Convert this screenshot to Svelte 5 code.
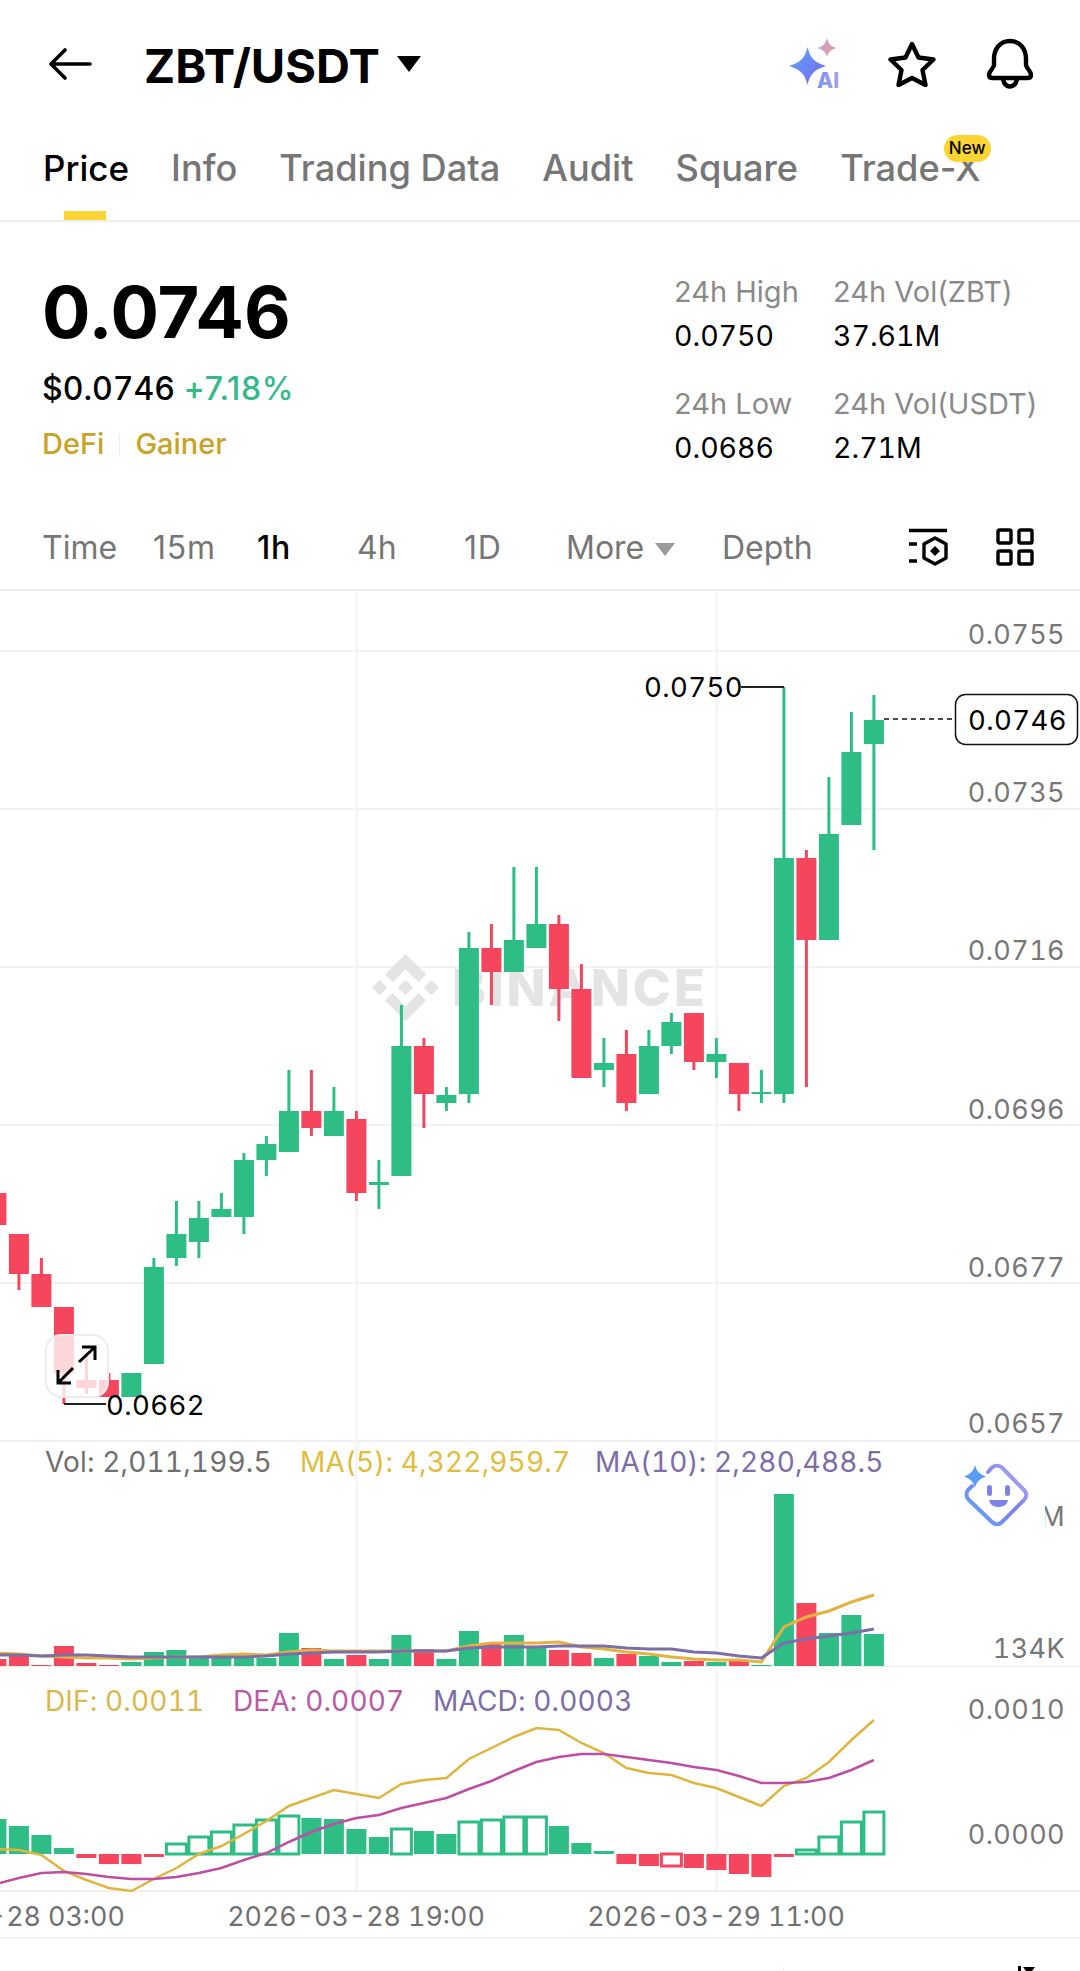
<script>
  const tabs = ['Price', 'Info', 'Trading Data', 'Audit', 'Square', 'Trade-X'];
  const slotX = (i) => 18.9 + 22.5 * i;

  // up, bodyTop, bodyBottom, wickTop, wickBottom (page px), first one is index -1
  const candles = [
    [0, 1192, 1224, 1192, 1224], [0, 1233, 1273, 1233, 1289], [0, 1273, 1306, 1257, 1306],
    [0, 1306, 1372, 1306, 1403], [0, 1379, 1387, 1352, 1393], [0, 1379, 1396, 1372, 1396],
    [1, 1372, 1396, 1372, 1396], [1, 1266, 1363, 1257, 1363], [1, 1233, 1257, 1200, 1265],
    [1, 1217, 1241, 1200, 1257], [1, 1208, 1216, 1192, 1216], [1, 1159, 1216, 1152, 1233],
    [1, 1143, 1159, 1135, 1175], [1, 1110, 1151, 1069, 1151], [0, 1110, 1127, 1069, 1135],
    [1, 1110, 1135, 1086, 1135], [0, 1118, 1192, 1110, 1200], [1, 1181, 1184, 1159, 1208],
    [1, 1045, 1175, 1004, 1175], [0, 1045, 1093, 1037, 1127], [1, 1094, 1102, 1086, 1110],
    [1, 947, 1093, 931, 1102], [0, 947, 971, 923, 1004], [1, 939, 971, 866, 971],
    [1, 923, 947, 866, 947], [0, 923, 988, 914, 1020], [0, 988, 1077, 963, 1077],
    [1, 1062, 1069, 1037, 1086], [0, 1053, 1102, 1029, 1110], [1, 1045, 1093, 1029, 1093],
    [1, 1021, 1045, 1012, 1053], [0, 1012, 1061, 1012, 1069], [1, 1053, 1061, 1037, 1077],
    [0, 1062, 1093, 1062, 1110], [1, 1091, 1093, 1069, 1102], [1, 857, 1093, 686, 1102],
    [0, 857, 939, 849, 1086], [1, 833, 939, 776, 939], [1, 751, 824, 711, 824],
    [1, 719, 743, 694, 849]
  ];

  const volTop = [
    1658, 1655, 1664, 1645, 1662, 1664, 1661, 1651, 1649, 1655, 1655, 1657, 1657, 1632,
    1647, 1658, 1654, 1658, 1634, 1648, 1658, 1630, 1643, 1634, 1647, 1649, 1652, 1657,
    1653, 1655, 1661, 1660, 1661, 1660, 1664, 1493, 1602, 1632, 1614, 1633
  ];
  const ma5 = [
    1652, 1653, 1655, 1656, 1657, 1657, 1658, 1657, 1656, 1656, 1654, 1653, 1654, 1651, 1649,
    1650, 1650, 1650, 1650, 1650, 1650, 1645, 1642, 1642, 1642, 1641, 1646, 1648, 1651, 1653,
    1656, 1658, 1659, 1659, 1661, 1626, 1616, 1610, 1601, 1594
  ];
  const ma10 = [
    1654, 1654, 1655, 1654, 1654, 1655, 1656, 1656, 1656, 1656, 1656, 1656, 1655, 1653, 1652,
    1651, 1651, 1651, 1650, 1650, 1650, 1647, 1646, 1646, 1646, 1645, 1645, 1645, 1647, 1648,
    1648, 1651, 1652, 1655, 1657, 1642, 1638, 1635, 1632, 1628
  ];
  // [top or bottom edge, hollow], zero line is at 1853
  const macd = [
    [1818, 0], [1825, 0], [1834, 0], [1847, 0], [1857, 0], [1863, 0], [1863, 0], [1856, 0],
    [1843, 1], [1836, 1], [1831, 1], [1824, 1], [1819, 1], [1815, 1], [1817, 0], [1818, 0],
    [1828, 0], [1836, 0], [1828, 1], [1830, 0], [1833, 0], [1821, 1], [1819, 1], [1816, 1],
    [1816, 1], [1825, 0], [1842, 0], [1850, 0], [1863, 0], [1865, 0], [1865, 1], [1867, 0],
    [1869, 0], [1873, 0], [1876, 0], [1856, 0], [1849, 1], [1836, 1], [1821, 1], [1811, 1]
  ];
  const dif = [
    1848, 1849, 1854, 1870, 1879, 1887, 1890, 1878, 1867, 1853, 1845, 1833, 1820, 1805, 1797,
    1789, 1793, 1797, 1783, 1779, 1777, 1758, 1747, 1736, 1727, 1729, 1742, 1752, 1767, 1772,
    1774, 1782, 1787, 1796, 1805, 1785, 1777, 1761, 1739, 1719
  ];
  const dea = [
    1883, 1877, 1872, 1871, 1873, 1876, 1878, 1878, 1876, 1872, 1867, 1859, 1852, 1841, 1831,
    1823, 1817, 1814, 1807, 1802, 1797, 1788, 1780, 1770, 1761, 1756, 1753, 1753, 1756, 1759,
    1762, 1766, 1769, 1775, 1782, 1782, 1781, 1777, 1769, 1759
  ];

  const line = (ys) => ys.map((y, n) => `${slotX(n - 1).toFixed(1)},${y}`).join(' ');
  const priceLabels = [['0.0755', 643], ['0.0735', 801], ['0.0716', 959], ['0.0696', 1118], ['0.0677', 1276], ['0.0657', 1432]];
  const gridY = [650, 808, 966, 1124, 1282, 1440];
</script>

<div class="page">
  <header class="topbar">
    <svg class="back" viewBox="0 0 44 32" width="44" height="32" fill="none" stroke="#000" stroke-width="3.6" stroke-linecap="round" stroke-linejoin="round">
      <path d="M42 16H4M17 2 3 16l14 14" />
    </svg>
    <div class="pair">ZBT/USDT</div>
    <span class="caret"></span>
    <div class="actions">
      <svg class="ai" viewBox="0 0 54 52" width="54" height="52">
        <defs>
          <linearGradient id="sparkA" x1="0" y1="0" x2="1" y2="1">
            <stop offset="0" stop-color="#5aa4f8" />
            <stop offset="1" stop-color="#7a68f0" />
          </linearGradient>
          <linearGradient id="sparkB" x1="0" y1="0" x2="1" y2="1">
            <stop offset="0" stop-color="#b79ae8" />
            <stop offset="1" stop-color="#f0a58c" />
          </linearGradient>
          <linearGradient id="aiText" x1="0" y1="0" x2="1" y2="0">
            <stop offset="0" stop-color="#7a92ec" />
            <stop offset="1" stop-color="#a5a0ee" />
          </linearGradient>
        </defs>
        <path d="M19.500 9C22 20 26 24 38 28 26 32 22 36 19.500 47 17 36 13 32 1 28 13 24 17 20 19.500 9Z" fill="url(#sparkA)" />
        <path d="M39 0C40.500 6 43 8.500 49 10 43 11.500 40.500 14 39 19 37.500 14 35 11.500 29 10 35 8.500 37.500 6 39 0Z" fill="url(#sparkB)" />
        <text class="ai-text" x="29" y="50" fill="url(#aiText)">AI</text>
      </svg>
      <svg viewBox="0 0 48 46" width="48" height="46" fill="none" stroke="#000" stroke-width="4.4" stroke-linejoin="round">
        <path d="M24 3l6.500 13.500 15 2-11 10.500 3 15L24 37l-13.500 7 3-15L2.500 18.500l15-2z" />
      </svg>
      <svg viewBox="0 0 48 52" width="48" height="52" fill="none" stroke="#000" stroke-width="4.4" stroke-linejoin="round">
        <path d="M24 3C14 3 8 11 8 21V27C8 30 3 33 3 37 3 39 4 40 6 40H42C44 40 45 39 45 37 45 33 40 30 40 27V21C40 11 34 3 24 3Z" />
        <path d="M17 41C18 46 21 48.500 24 48.500S30 46 31 41" />
      </svg>
    </div>
  </header>

  <nav class="tabs">
    {#each tabs as tab, i}
      <span class="tab" class:active={i === 0}>
        {tab}
        {#if tab === 'Trade-X'}<span class="new">New</span>{/if}
      </span>
    {/each}
  </nav>

  <section class="quote">
    <div class="last">
      <div class="big">0.0746</div>
      <div class="fiat">$0.0746 <span class="up">+7.18%</span></div>
      <div class="chips"><span>DeFi</span><i></i><span>Gainer</span></div>
    </div>
    <div class="stats">
      <div><div class="k">24h High</div><div class="v">0.0750</div></div>
      <div><div class="k">24h Vol(ZBT)</div><div class="v">37.61M</div></div>
      <div><div class="k">24h Low</div><div class="v">0.0686</div></div>
      <div><div class="k">24h Vol(USDT)</div><div class="v">2.71M</div></div>
    </div>
  </section>

  <div class="intervals">
    <span class="w1">Time</span>
    <span class="w2 loose">15m</span>
    <span class="w3 loose on">1h</span>
    <span class="w4">4h</span>
    <span class="w5 loose">1D</span>
    <span class="w6">More<b></b></span>
    <span class="w7">Depth</span>
    <svg class="tool" viewBox="0 0 40 38" width="40" height="38" fill="none" stroke="#000" stroke-width="3.400">
      <path d="M1 2.500H39M1 16H9M1 33H9" />
      <path d="M27 10 38 16V30L27 36 16 30V16Z" stroke-linejoin="round" />
      <path d="M27 18l5 5-5 5-5-5z" fill="#000" stroke="none" />
    </svg>
    <svg class="grid-icon" viewBox="0 0 38 38" width="38" height="38" fill="none" stroke="#000" stroke-width="3.400">
      <rect x="2" y="2" width="13" height="13" rx="1.500" />
      <rect x="23" y="2" width="13" height="13" rx="1.500" />
      <rect x="2" y="23" width="13" height="13" rx="1.500" />
      <rect x="23" y="23" width="13" height="13" rx="1.500" />
    </svg>
  </div>

  <svg class="pane" width="1080" height="851" viewBox="0 590 1080 851">
    <g stroke="#f2f2f2" stroke-width="2">
      {#each gridY as y}<line x1="0" x2="1080" y1={y} y2={y} />{/each}
      <line x1="356.500" x2="356.500" y1="590" y2="1441" />
      <line x1="716.500" x2="716.500" y1="590" y2="1441" />
    </g>

    <g fill="#e4e4e4" transform="translate(372 953) scale(.53)">
      <path d="M38.730 53.200l24.590-24.580 24.600 24.600 14.300-14.310L63.320 0 24.430 38.900l14.300 14.300z" />
      <path d="M0 63.310l14.300-14.310 14.310 14.310-14.310 14.300z" />
      <path d="M38.730 73.410l24.590 24.590 24.600-24.600 14.310 14.290-38.900 38.910-38.910-38.880v-.03z" />
      <path d="M98 63.310l14.300-14.310 14.310 14.300-14.310 14.320z" />
      <path d="M77.830 63.300L63.320 48.780 52.590 59.510l-1.240 1.230-2.540 2.540 14.510 14.500 14.510-14.470z" />
    </g>
    <text class="mark" x="452" y="1005">BINANCE</text>

    {#each candles as c, n}
      {@const x = slotX(n - 1)}
      <g class={c[0] ? 'green' : 'red'}>
        <rect x={x - 1.500} y={c[3]} width="3" height={c[4] - c[3]} />
        <rect x={x - 10} y={c[1]} width="20" height={c[2] - c[1]} />
      </g>
    {/each}

    <rect class="expand" x="46" y="1334" width="62" height="62" rx="15" />
    <path d="M95 1346 79 1361M82 1346H95V1359M58 1382 73 1367M58 1369V1382H71" fill="none" stroke="#000" stroke-width="3" />

    <path d="M741 686H784" stroke="#222" stroke-width="2" fill="none" />
    <text class="tag" x="644" y="696">0.0750</text>
    <path d="M64 1403H106" stroke="#222" stroke-width="2" fill="none" />
    <text class="tag" x="106" y="1414">0.0662</text>

    <path d="M884 718H955" stroke="#111" stroke-width="1.500" stroke-dasharray="5 4" fill="none" />
    <rect class="last-box" x="955.500" y="693.500" width="122" height="50" rx="10" />
    <text class="tag" x="968" y="729">0.0746</text>

    {#each priceLabels as [label, y]}
      <text class="axis" x="1065" y={y} text-anchor="end">{label}</text>
    {/each}
  </svg>

  <svg class="pane" width="1080" height="225" viewBox="0 1441 1080 225">
    <line x1="356.500" x2="356.500" y1="1441" y2="1666" stroke="#f2f2f2" stroke-width="2" />
    <line x1="716.500" x2="716.500" y1="1441" y2="1666" stroke="#f2f2f2" stroke-width="2" />
    <line x1="0" x2="1080" y1="1665.500" y2="1665.500" stroke="#eee" />
    <text class="legend" x="45" y="1471" fill="#6f6f6f">Vol: 2,011,199.5</text>
    <text class="legend" x="300" y="1471" fill="#e0bd3e">MA(5): 4,322,959.7</text>
    <text class="legend" x="595" y="1471" fill="#7c6ea8">MA(10): 2,280,488.5</text>

    {#each volTop as top, n}
      <rect class={candles[n][0] ? 'green' : 'red'} x={slotX(n - 1) - 10} y={top} width="20" height={1665 - top} />
    {/each}
    <polyline points={line(ma5)} fill="none" stroke="#e3b341" stroke-width="3" />
    <polyline points={line(ma10)} fill="none" stroke="#7c6ea8" stroke-width="3" />

    <text class="axis" x="1065" y="1525" text-anchor="end">M</text>
    <rect x="1000" y="1490" width="45" height="45" fill="#fff" />
    <text class="axis" x="1065" y="1657" text-anchor="end">134K</text>

    <defs>
      <linearGradient id="faceG" x1="0" y1="1" x2="1" y2="0">
        <stop offset="0" stop-color="#5fa8f0" />
        <stop offset=".55" stop-color="#7c82ea" />
        <stop offset="1" stop-color="#c0aef2" />
      </linearGradient>
    </defs>
    <g transform="translate(964 1463)">
      <path d="M24 8 28 3.500C31 1 35 1 38 3.500L60 26C63 29 63 33 60 36L38 58C35 61 31 61 28 58L5 36C2 33 2 29 4 26L8 22" fill="none" stroke="url(#faceG)" stroke-width="4" stroke-linecap="round" />
      <path d="M11 1C12.500 7 15 10 22 12.500 15 15 12.500 18 11 24 9.500 18 7 15 0 12.500 7 10 9.500 7 11 1Z" fill="#5b9cf5" />
      <rect x="23" y="21" width="5" height="11" rx="2.500" fill="#7d83e8" />
      <rect x="41" y="21" width="5" height="11" rx="2.500" fill="#7d83e8" />
      <path d="M25 36H44C43 41 39 43 34.500 43S26 41 25 36Z" fill="#7d83e8" />
    </g>
  </svg>

  <svg class="pane" width="1080" height="225" viewBox="0 1666 1080 225">
    <line x1="356.500" x2="356.500" y1="1666" y2="1889" stroke="#f2f2f2" stroke-width="2" />
    <line x1="716.500" x2="716.500" y1="1666" y2="1889" stroke="#f2f2f2" stroke-width="2" />
    <line x1="0" x2="1080" y1="1890" y2="1890" stroke="#efefef" stroke-width="2" />
    <text class="legend" x="45" y="1710" fill="#d9b84f">DIF: 0.0011</text>
    <text class="legend" x="233" y="1710" fill="#b95aa6">DEA: 0.0007</text>
    <text class="legend" x="433" y="1710" fill="#7c6ea8">MACD: 0.0003</text>
    <text class="axis" x="1065" y="1718" text-anchor="end">0.0010</text>
    <text class="axis" x="1065" y="1843" text-anchor="end">0.0000</text>

    {#each macd as [edge, hollow], n}
      {@const x = slotX(n - 1)}
      {@const top = Math.min(edge, 1853)}
      {@const h = Math.abs(edge - 1853)}
      <rect
        class={edge < 1853 ? 'green' : 'red'}
        class:hollow={hollow}
        x={x - 10}
        y={top}
        width="20"
        height={h}
      />
    {/each}
    <polyline points={line(dif)} fill="none" stroke="#e0b53f" stroke-width="2.500" />
    <polyline points={line(dea)} fill="none" stroke="#bb4fa6" stroke-width="2.500" />
  </svg>

  <div class="dates">
    <span class="d1">2026-03-28 03:00</span>
    <span class="d2">2026-03-28 19:00</span>
    <span class="d3">2026-03-29 11:00</span>
  </div>

  <div class="cutoff">
    <i class="rule"></i>
    <i class="bar"></i>
    <i class="tri"></i>
  </div>
</div>

<style>
  :global(body) {
    margin: 0;
    background: #fff;
  }

  .page {
    width: 1080px;
    height: 1971px;
    overflow: hidden;
    background: #fff;
    color: #000;
    font-family: Inter, "Liberation Sans", sans-serif;
  }

  .topbar {
    display: flex;
    align-items: center;
    height: 128px;
    padding: 0 46px 0 48px;
    box-sizing: border-box;
  }

  .back {
    flex: none;
  }

  .pair {
    margin-left: 52px;
    font-size: 47px;
    font-weight: 700;
    line-height: 1;
    padding-top: 2px;
  }

  .caret {
    width: 0;
    height: 0;
    margin-left: 17px;
    margin-top: -1px;
    border-left: 12px solid transparent;
    border-right: 12px solid transparent;
    border-top: 16px solid #000;
  }

  .actions {
    display: flex;
    align-items: center;
    gap: 50px;
    margin-left: auto;
  }

  .ai {
    margin-right: -4px;
  }

  .ai-text {
    font-size: 21px;
    font-weight: 800;
  }

  .tabs {
    display: flex;
    gap: 42px;
    height: 94px;
    padding-left: 43px;
    box-sizing: border-box;
    border-bottom: 2px solid #eee;
  }

  .tab {
    position: relative;
    font-size: 36.200px;
    line-height: 44px;
    padding-top: 18px;
    color: #767676;
    font-weight: 500;
    white-space: nowrap;
  }

  .tab.active {
    color: #000;
    font-size: 35px;
  }

  .tab.active::after {
    content: "";
    position: absolute;
    left: 21px;
    bottom: 0;
    width: 42px;
    height: 9px;
    background: #fcd535;
  }

  .new {
    position: absolute;
    right: -10px;
    top: 7px;
    padding: 0 5px;
    height: 27px;
    border-radius: 13.500px;
    background: #fcd535;
    color: #000;
    font-size: 17px;
    line-height: 27px;
    font-weight: 500;
  }

  .quote {
    display: flex;
    justify-content: space-between;
    height: 248px;
    box-sizing: border-box;
    padding: 52px 0 0 42px;
  }

  .big {
    font-size: 72px;
    font-weight: 700;
    line-height: 76px;
  }

  .fiat {
    margin-top: 20px;
    font-size: 32px;
    font-variant-numeric: tabular-nums;
    line-height: 38px;
    font-weight: 500;
  }

  .up {
    color: #35b88a;
    font-variant-numeric: normal;
    letter-spacing: .6px;
  }

  .chips {
    display: flex;
    align-items: center;
    margin-top: 19px;
    color: #c9a227;
    font-size: 29px;
    line-height: 34px;
    font-weight: 500;
  }

  .chips i {
    width: 1px;
    height: 20px;
    margin: 0 15px;
    background: #eee;
  }

  .stats {
    display: grid;
    grid-template-columns: 159px 247px;
    row-gap: 32px;
    align-content: start;
  }

  .k {
    font-size: 29px;
    line-height: 36px;
    color: #8a8a8a;
  }

  .v {
    margin-top: 8px;
    font-size: 28.500px;
    font-variant-numeric: tabular-nums;
    line-height: 36px;
    color: #000;
  }

  .intervals {
    position: relative;
    display: flex;
    align-items: center;
    height: 121px;
    box-sizing: border-box;
    padding: 35px 0 0 42px;
    border-bottom: 2px solid #eee;
    font-size: 32px;
    color: #767676;
  }

  .intervals span {
    flex: none;
  }

  .intervals .on {
    color: #000;
    font-weight: 500;
  }

  .loose {
    letter-spacing: .8px;
  }

  .w1 { width: 111px; }
  .w2 { width: 104px; }
  .w3 { width: 100px; }
  .w4 { width: 107px; }
  .w5 { width: 102px; }
  .w6 { width: 156px; }
  .w7 { width: 186px; }

  .intervals b {
    display: inline-block;
    margin-left: 11px;
    vertical-align: 3px;
    border-left: 10px solid transparent;
    border-right: 10px solid transparent;
    border-top: 13px solid #9a9a9a;
  }

  .grid-icon {
    margin-left: 48px;
  }

  .pane {
    display: block;
    font-variant-numeric: tabular-nums;
  }

  .green { fill: #2ebd85; }
  .red { fill: #f6465d; }

  .green.hollow {
    fill: #fff;
    stroke: #2ebd85;
    stroke-width: 3;
  }

  .red.hollow {
    fill: #fff;
    stroke: #f6465d;
    stroke-width: 3;
  }

  .mark {
    font-size: 51px;
    font-weight: 800;
    fill: #e4e4e4;
    letter-spacing: 3px;
  }

  .expand {
    fill: rgba(255, 255, 255, .78);
    stroke: #ececec;
    stroke-width: 2;
  }

  .tag {
    font-size: 27.500px;
    letter-spacing: .4px;
    fill: #000;
  }

  .last-box {
    fill: #fff;
    stroke: #111;
    stroke-width: 1.500;
  }

  .axis {
    font-size: 27px;
    letter-spacing: .4px;
    fill: #777;
  }

  .legend {
    font-size: 28px;
    letter-spacing: .15px;
  }

  .dates {
    position: relative;
    height: 45px;
    border-bottom: 2px solid #f2f2f2;
    font-size: 26.800px;
    font-variant-numeric: tabular-nums;
    line-height: 48px;
    color: #707070;
  }

  .dates span {
    position: absolute;
    top: 0;
    transform: translateX(-50%);
    white-space: nowrap;
  }

  .d1 { left: -4px; }
  .d2 { left: 356px; }
  .d3 { left: 716px; }

  .cutoff {
    position: relative;
    height: 36px;
  }

  .cutoff i {
    position: absolute;
  }

  .rule {
    left: 783px;
    top: 28px;
    width: 1px;
    height: 8px;
    background: #eee;
  }

  .bar {
    left: 1018px;
    top: 27px;
    width: 2.500px;
    height: 9px;
    background: #000;
  }

  .tri {
    left: 1023px;
    top: 28px;
    border-left: 6px solid transparent;
    border-right: 6px solid transparent;
    border-top: 8px solid #000;
  }
</style>
